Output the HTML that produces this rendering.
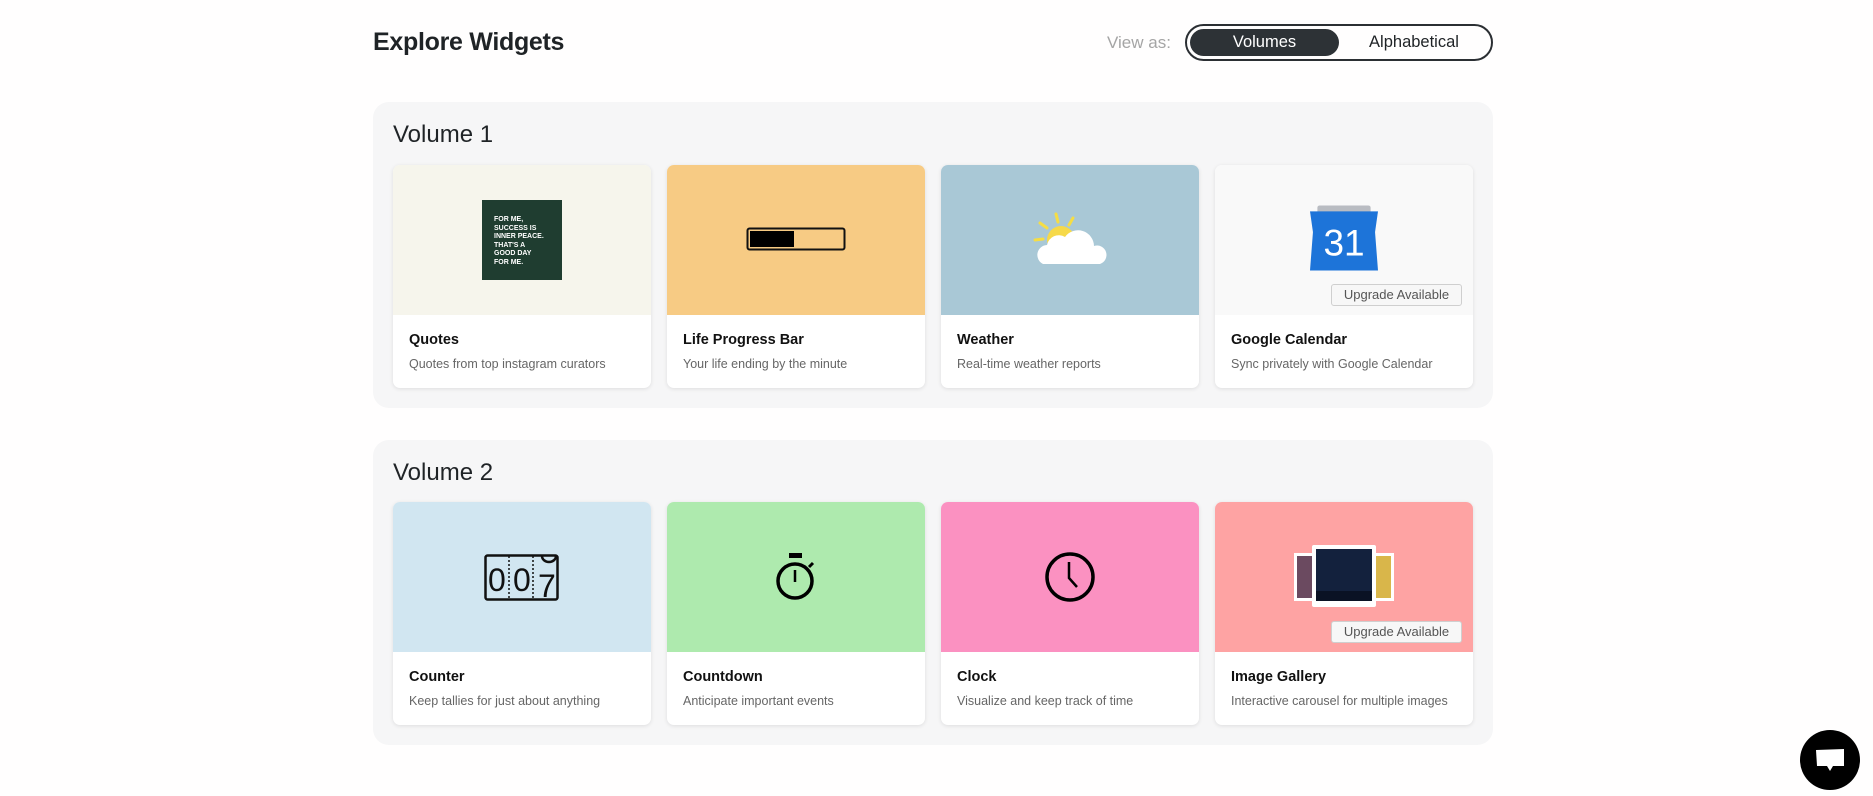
<!DOCTYPE html>
<html><head><meta charset="utf-8"><style>
*{box-sizing:border-box;margin:0;padding:0}
body{width:1873px;height:796px;background:#fffefe;font-family:"Liberation Sans",sans-serif;position:relative;overflow:hidden;color:#1f2326}
.h1{position:absolute;left:373px;top:28px;font-size:25px;font-weight:bold;letter-spacing:-0.3px}
.view{position:absolute;left:1107px;top:33px;font-size:17px;color:#a5a5a5}
.tog{position:absolute;left:1185px;top:24px;width:308px;height:37px;border:2px solid #2b2f33;border-radius:19px}
.tog .on{position:absolute;left:3px;top:3px;width:149px;height:27px;border-radius:14px;background:#2d3236;color:#fff;font-size:16.5px;text-align:center;line-height:27px}
.tog .off{position:absolute;left:152px;top:3px;width:150px;height:27px;font-size:16.5px;text-align:center;line-height:27px;color:#1f2326}
.panel{position:absolute;left:373px;width:1120px;background:#f6f6f7;border-radius:16px}
.vt{position:absolute;left:20px;top:19px;font-size:24px;color:#1f2326}
.card{position:absolute;width:258px;height:223px;background:#fff;border-radius:7px;box-shadow:0 1px 4px rgba(0,0,0,.1);overflow:hidden}
.img{height:150px;position:relative;display:flex;align-items:center;justify-content:center}
.t{position:absolute;left:16px;top:167px;font-size:14.5px;font-weight:bold;color:#111}
.d{position:absolute;left:16px;top:192px;font-size:12.5px;color:#666}
.up{position:absolute;right:11px;bottom:9px;width:131px;height:22px;border:1px solid #cfcfcf;border-radius:3px;background:#f7f7f7;font-size:13px;color:#555;text-align:center;line-height:20px}
</style></head><body>
<div class="h1">Explore Widgets</div>
<div class="view">View as:</div>
<div class="tog"><div class="on">Volumes</div><div class="off">Alphabetical</div></div>

<div class="panel" style="top:102px;height:306px">
<div class="vt">Volume 1</div>
<div class="card" style="left:20px;top:63px"><div class="img" style="background:#f6f5ec">
<div style="width:80px;height:80px;background:#1f3d30;color:#fff;font-size:7px;font-weight:bold;line-height:8.5px;padding:16px 0 0 12px">FOR ME,<br>SUCCESS IS<br>INNER PEACE.<br>THAT'S A<br>GOOD DAY<br>FOR ME.</div></div>
<div class="t">Quotes</div><div class="d">Quotes from top instagram curators</div></div>
<div class="card" style="left:294px;top:63px"><div class="img" style="background:#f7cb84">
<svg width="100" height="26"><rect x="1.5" y="1.5" width="97" height="21" rx="2" fill="none" stroke="#111" stroke-width="2"/><rect x="4" y="4" width="44" height="16" fill="#000"/></svg></div>
<div class="t">Life Progress Bar</div><div class="d">Your life ending by the minute</div></div>
<div class="card" style="left:568px;top:63px"><div class="img" style="background:#a9c8d6">
<svg width="84" height="64" viewBox="0 0 84 64"><g stroke="#f5dd45" stroke-width="3" stroke-linecap="round"><line x1="28" y1="6" x2="30" y2="14"/><line x1="12" y1="15" x2="19" y2="20"/><line x1="7" y1="32" x2="15" y2="31"/><line x1="45" y1="10" x2="41" y2="17"/></g><circle cx="33" cy="32" r="14" fill="#f6d94a"/><path d="M15 56 a10 10 0 0 1 4-19 a12 12 0 0 1 18-8 a16 16 0 0 1 29 9 a9 9 0 0 1 6 18z" fill="#fff"/></svg></div>
<div class="t">Weather</div><div class="d">Real-time weather reports</div></div>
<div class="card" style="left:842px;top:63px"><div class="img" style="background:#f9f9f9">
<svg width="68" height="66" viewBox="0 0 46 44" style="margin-top:-4px"><rect x="5" y="0" width="36" height="6" rx="1.5" fill="#b9bcc2"/><path d="M0 4h46l-2 14l2 26H0l2-26z" fill="#1d74d9"/><text x="23" y="34" font-size="25" fill="#fff" text-anchor="middle" font-family="Liberation Sans">31</text></svg>
<div class="up">Upgrade Available</div></div>
<div class="t">Google Calendar</div><div class="d">Sync privately with Google Calendar</div></div>
</div>

<div class="panel" style="top:440px;height:305px">
<div class="vt">Volume 2</div>
<div class="card" style="left:20px;top:62px"><div class="img" style="background:#d1e6f1">
<svg width="76" height="52" viewBox="0 0 76 52"><rect x="1.5" y="4.5" width="72" height="44" rx="2" fill="none" stroke="#111" stroke-width="2.5"/><g stroke="#111" stroke-dasharray="2 2" stroke-width="1.5"><line x1="25" y1="5" x2="25" y2="48"/><line x1="49" y1="5" x2="49" y2="48"/></g><path d="M58 5 a7 6 0 0 0 14 0" fill="none" stroke="#111" stroke-width="2.5"/><g font-family="Liberation Sans" font-size="32" fill="#111"><text x="4" y="40">0</text><text x="29" y="40">0</text><text x="54" y="46">7</text></g></svg></div>
<div class="t">Counter</div><div class="d">Keep tallies for just about anything</div></div>
<div class="card" style="left:294px;top:62px"><div class="img" style="background:#aeeaae">
<svg width="44" height="48" viewBox="0 0 44 48"><rect x="15" y="0" width="13" height="5" fill="#000"/><circle cx="21" cy="28" r="17" fill="none" stroke="#000" stroke-width="3.5"/><line x1="21" y1="17" x2="21" y2="29" stroke="#000" stroke-width="2.5"/><line x1="35" y1="14" x2="39" y2="10" stroke="#000" stroke-width="3"/></svg></div>
<div class="t">Countdown</div><div class="d">Anticipate important events</div></div>
<div class="card" style="left:568px;top:62px"><div class="img" style="background:#fb91c1">
<svg width="54" height="54" viewBox="0 0 54 54"><circle cx="27" cy="27" r="23" fill="none" stroke="#000" stroke-width="3.5"/><path d="M26 12v16l8 9" fill="none" stroke="#000" stroke-width="2.5"/></svg></div>
<div class="t">Clock</div><div class="d">Visualize and keep track of time</div></div>
<div class="card" style="left:842px;top:62px"><div class="img" style="background:#fea3a3">
<svg width="100" height="64" viewBox="0 0 100 64"><rect x="0" y="8" width="22" height="48" fill="#fff"/><rect x="3" y="11" width="16" height="42" fill="#6b4a60"/><rect x="78" y="8" width="22" height="48" fill="#fff"/><rect x="81" y="11" width="16" height="42" fill="#d9b64a"/><rect x="18" y="0" width="64" height="62" rx="2" fill="#fff"/><rect x="22" y="4" width="56" height="52" fill="#13213d"/><rect x="22" y="46" width="56" height="10" fill="#0a1224"/></svg>
<div class="up">Upgrade Available</div></div>
<div class="t">Image Gallery</div><div class="d">Interactive carousel for multiple images</div></div>
</div>

<svg style="position:absolute;left:1800px;top:730px" width="60" height="60" viewBox="0 0 60 60"><circle cx="30" cy="30" r="30" fill="#000"/><path d="M16 20l28-1v17H33l-3 5-3-5H17z" fill="#fff"/></svg>
</body></html>
